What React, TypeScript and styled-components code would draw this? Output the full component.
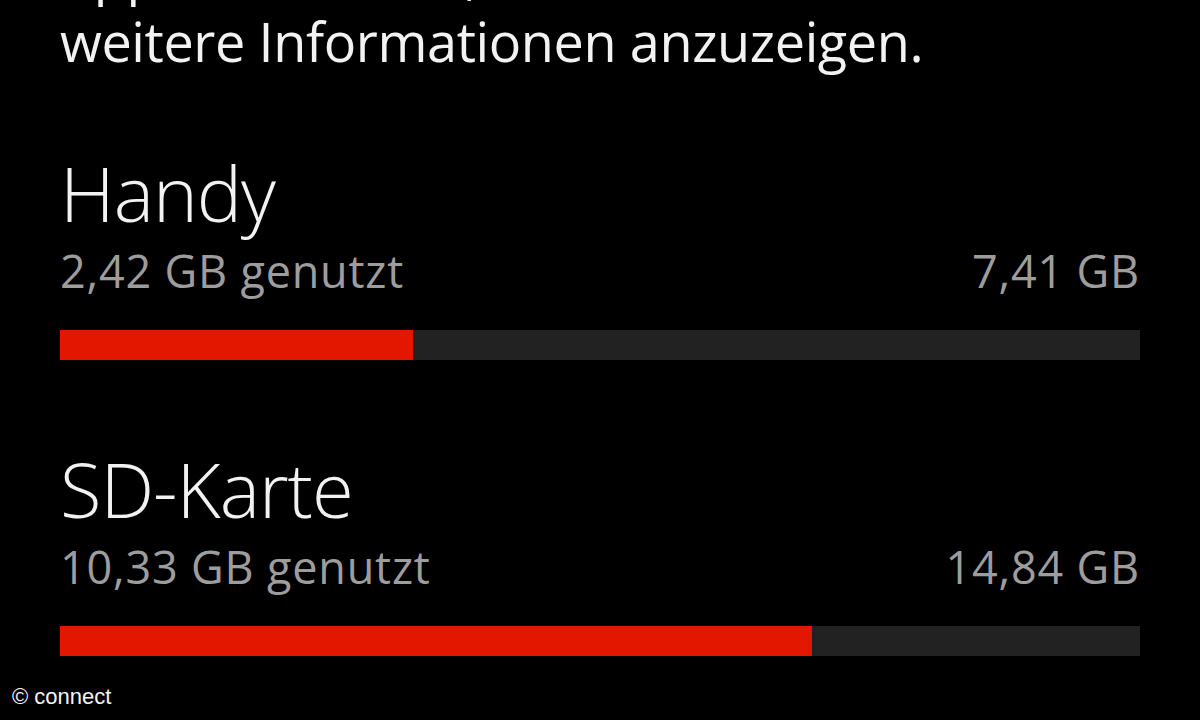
import React from "react";
import styled, { createGlobalStyle } from "styled-components";

const GlobalStyle = createGlobalStyle`
  html, body {
    margin: 0;
    padding: 0;
    background: #000;
    overflow: hidden;
  }
`;

const Screen = styled.div`
  position: relative;
  width: 1200px;
  height: 720px;
  overflow: hidden;
  background: #000;
  color: #f2f2f2;
  font-family: "Open Sans", "Noto Sans", sans-serif;
`;
const Content = styled.div`
  padding: 0 60px;
  margin-top: -61px;
`;
const Intro = styled.p`
  margin: 0;
  font-size: 54px;
  line-height: 68px;
  font-weight: 400;
  letter-spacing: -0.4px;
`;
const Storage = styled.section<{ $gap: number }>`
  margin-top: ${(p) => p.$gap}px;
`;
const Title = styled.h2`
  margin: 0;
  font-size: 76px;
  line-height: 86px;
  font-weight: 300;
  letter-spacing: -1px;
`;
const UsageRow = styled.div`
  display: flex;
  justify-content: space-between;
  align-items: baseline;
  margin-top: 10px;
  font-size: 45px;
  line-height: 50px;
  color: #9d9d9d;
  letter-spacing: 0.8px;
`;
const Track = styled.div`
  margin-top: 34px;
  height: 30px;
  background: #222222;
`;
const Fill = styled.div`
  height: 100%;
  background: #e31600;
`;
const Watermark = styled.div`
  position: absolute;
  left: 12px;
  bottom: 10px;
  font-family: "Liberation Sans", Arial, sans-serif;
  font-size: 22px;
  color: #f4f4f4;
`;

// ---- STYLE END ----

const drives = [
  { name: "Handy", used: 2.42, total: 7.41, gap: 75 },
  { name: "SD-Karte", used: 10.33, total: 14.84, gap: 86 },
];

const fmt = (n: number) => n.toFixed(2).replace(".", ",");

function App() {
  return (
    <Screen>
      <GlobalStyle />
      <Content>
        <Intro>
          Apps auswählen, um
          <br />
          weitere Informationen anzuzeigen.
        </Intro>
        {drives.map((d) => (
          <Storage key={d.name} $gap={d.gap}>
            <Title>{d.name}</Title>
            <UsageRow>
              <span>{fmt(d.used)} GB genutzt</span>
              <span>{fmt(d.total)} GB</span>
            </UsageRow>
            <Track>
              <Fill style={{ width: `${(d.used / d.total) * 100}%` }} />
            </Track>
          </Storage>
        ))}
      </Content>
      <Watermark>© connect</Watermark>
    </Screen>
  );
}

export default App;
